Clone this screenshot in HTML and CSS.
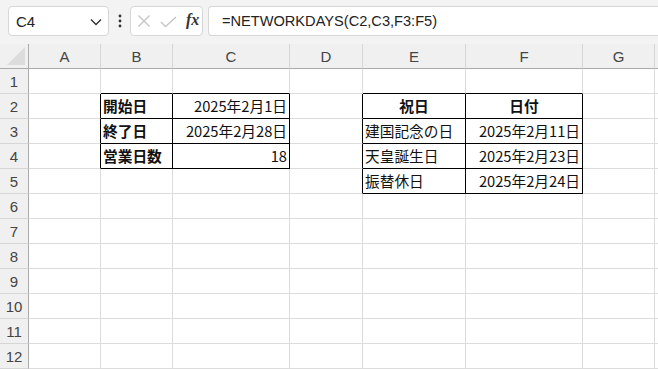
FILE: index.html
```html
<!DOCTYPE html>
<html lang="ja">
<head>
<meta charset="utf-8">
<link rel="stylesheet" href="styles.css">
</head>
<body>
<div class="app">
  <div class="topbar">
    <div class="namebox">
      <span class="nametext">C4</span>
      <svg class="chev" width="12" height="8" viewBox="0 0 12 8"><polyline points="1,1.5 6,6.5 11,1.5" fill="none" stroke="#333" stroke-width="1.4"/></svg>
    </div>
    <div class="dots">
      <svg width="4" height="14" viewBox="0 0 4 14"><circle cx="2" cy="2" r="1.4" fill="#333"/><circle cx="2" cy="7" r="1.4" fill="#333"/><circle cx="2" cy="12" r="1.4" fill="#333"/></svg>
    </div>
    <div class="fbuttons">
      <svg class="ico-x" width="14" height="14" viewBox="0 0 14 14"><path d="M1.5 1.5 L12.5 12.5 M12.5 1.5 L1.5 12.5" stroke="#c4c4c4" stroke-width="1.3" fill="none"/></svg>
      <svg class="ico-ok" width="17" height="12" viewBox="0 0 17 12"><polyline points="1,6 5.5,10.5 16,1" fill="none" stroke="#c4c4c4" stroke-width="1.3"/></svg>
      <span class="fx">fx</span>
    </div>
    <div class="formula">=NETWORKDAYS(C2,C3,F3:F5)</div>
  </div>
  <div class="sheet">
    <div class="corner"><svg width="18" height="18" viewBox="0 0 18 18"><polygon points="18,0 18,18 0,18" fill="#dcdcdc"/></svg></div>
    <div class="ch">A</div><div class="ch">B</div><div class="ch">C</div><div class="ch">D</div><div class="ch">E</div><div class="ch">F</div><div class="ch">G</div><div class="ch"></div>

    <div class="rh">1</div>
    <div class="c"></div><div class="c b"></div><div class="c b"></div><div class="c"></div><div class="c b"></div><div class="c b"></div><div class="c"></div><div class="c"></div>

    <div class="rh">2</div>
    <div class="c r"></div><div class="c r b bold">開始日</div><div class="c r b num">2025年2月1日</div><div class="c r"></div><div class="c r b bold ctr">祝日</div><div class="c r b bold ctr">日付</div><div class="c"></div><div class="c"></div>

    <div class="rh">3</div>
    <div class="c r"></div><div class="c r b bold">終了日</div><div class="c r b num">2025年2月28日</div><div class="c r"></div><div class="c r b">建国記念の日</div><div class="c r b num">2025年2月11日</div><div class="c"></div><div class="c"></div>

    <div class="rh">4</div>
    <div class="c r"></div><div class="c r b bold">営業日数</div><div class="c r b num">18</div><div class="c r"></div><div class="c r b">天皇誕生日</div><div class="c r b num">2025年2月23日</div><div class="c"></div><div class="c"></div>

    <div class="rh">5</div>
    <div class="c"></div><div class="c"></div><div class="c"></div><div class="c r"></div><div class="c r b">振替休日</div><div class="c r b num">2025年2月24日</div><div class="c"></div><div class="c"></div>

    <div class="rh">6</div>
    <div class="c"></div><div class="c"></div><div class="c"></div><div class="c"></div><div class="c"></div><div class="c"></div><div class="c"></div><div class="c"></div>
    <div class="rh">7</div>
    <div class="c"></div><div class="c"></div><div class="c"></div><div class="c"></div><div class="c"></div><div class="c"></div><div class="c"></div><div class="c"></div>
    <div class="rh">8</div>
    <div class="c"></div><div class="c"></div><div class="c"></div><div class="c"></div><div class="c"></div><div class="c"></div><div class="c"></div><div class="c"></div>
    <div class="rh">9</div>
    <div class="c"></div><div class="c"></div><div class="c"></div><div class="c"></div><div class="c"></div><div class="c"></div><div class="c"></div><div class="c"></div>
    <div class="rh">10</div>
    <div class="c"></div><div class="c"></div><div class="c"></div><div class="c"></div><div class="c"></div><div class="c"></div><div class="c"></div><div class="c"></div>
    <div class="rh">11</div>
    <div class="c"></div><div class="c"></div><div class="c"></div><div class="c"></div><div class="c"></div><div class="c"></div><div class="c"></div><div class="c"></div>
    <div class="rh">12</div>
    <div class="c"></div><div class="c"></div><div class="c"></div><div class="c"></div><div class="c"></div><div class="c"></div><div class="c"></div><div class="c"></div>
  </div>
</div>
</body>
</html>
```

FILE: styles.css
```css
* { box-sizing: border-box; }
html, body { margin: 0; padding: 0; }
body {
  width: 658px;
  height: 369px;
  overflow: hidden;
  background: #ffffff;
  font-family: "Noto Sans CJK JP", "Noto Sans", sans-serif;
}
.app { width: 658px; height: 369px; overflow: hidden; }

.topbar {
  height: 44px;
  background: #f3f3f3;
  display: flex;
  align-items: flex-start;
  padding: 6px 0 0 8px;
  overflow: hidden;
}
.namebox, .fbuttons, .formula {
  height: 30px;
  background: #ffffff;
  border: 1px solid #d6d6d6;
  border-radius: 4px;
}
.namebox {
  width: 101px;
  flex: none;
  display: flex;
  align-items: center;
  justify-content: space-between;
  padding: 0 6px 0 7px;
}
.nametext {
  font-family: "Liberation Sans", Arial, sans-serif;
  font-size: 15px;
  color: #222;
  margin-top: 1px;
}
.chev { margin-top: 1px; }
.dots {
  width: 21px;
  flex: none;
  height: 30px;
  display: flex;
  align-items: center;
  justify-content: center;
  padding-left: 1px;
}
.fbuttons {
  width: 73px;
  flex: none;
  display: flex;
  align-items: center;
  padding-left: 6px;
}
.ico-x { margin-right: 9px; }
.ico-ok { margin-right: 9px; margin-top: 1px; }
.fx {
  font-family: "Liberation Serif", "Times New Roman", serif;
  font-style: italic;
  font-weight: bold;
  font-size: 16px;
  color: #333;
  margin-top: -2px;
}
.formula {
  flex: none;
  width: 470px;
  margin-left: 5px;
  border-right: none;
  border-radius: 4px 0 0 4px;
  display: flex;
  align-items: center;
  padding-left: 13px;
  font-family: "Liberation Sans", Arial, sans-serif;
  font-size: 14.6px;
  color: #222;
}

.sheet {
  display: grid;
  grid-template-columns: 29px 72px 72px 117px 73px 103px 117px 72px 1fr;
  grid-auto-rows: 25px;
}
.corner, .ch {
  background: #f0f0f0;
  border-bottom: 1px solid #ababab;
}
.corner {
  border-right: 1px solid #ababab;
  display: flex;
  align-items: flex-end;
  justify-content: flex-end;
  padding: 0 3px 3px 0;
}
.ch {
  border-right: 1px solid #d6d6d6;
  display: flex;
  align-items: center;
  justify-content: center;
  font-family: "Liberation Sans", Arial, sans-serif;
  font-size: 15px;
  color: #444;
}
.rh {
  background: #f0f0f0;
  border-right: 1px solid #ababab;
  border-bottom: 1px solid #d6d6d6;
  display: flex;
  align-items: center;
  justify-content: center;
  font-family: "Liberation Sans", Arial, sans-serif;
  font-size: 15px;
  color: #444;
}
.c {
  border-right: 1px solid #dcdcdc;
  border-bottom: 1px solid #dcdcdc;
  display: flex;
  align-items: center;
  padding: 0 2px 1px 2px;
  font-size: 14.7px;
  color: #111;
  white-space: nowrap;
  overflow: hidden;
}
.c.r { border-right-color: #000; }
.c.b { border-bottom-color: #000; }
.bold { font-weight: bold; }
.num { justify-content: flex-end; }
.ctr { justify-content: center; }
```
